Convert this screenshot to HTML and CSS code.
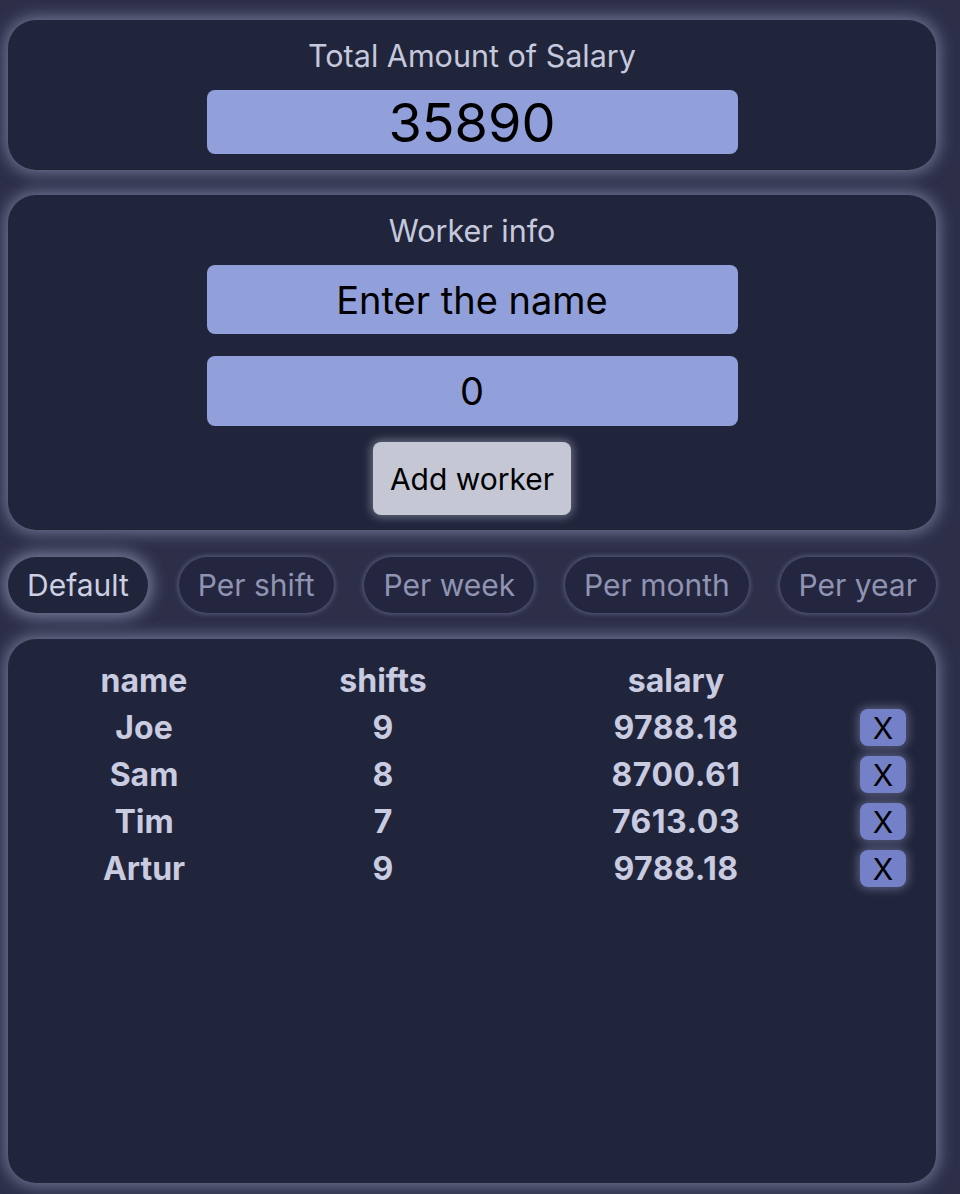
FILE: index.html
```html
<!DOCTYPE html>
<html lang="en">
<head>
<meta charset="utf-8">
<title>Salary</title>
<link rel="stylesheet" href="styles.css">
</head>
<body>
<div class="app">
  <section class="card total">
    <div class="title">Total Amount of Salary</div>
    <div class="field field-total">35890</div>
  </section>

  <section class="card worker">
    <div class="title">Worker info</div>
    <div class="field field-input">Enter the name</div>
    <div class="field field-input second">0</div>
    <button class="add-btn">Add worker</button>
  </section>

  <nav class="filters">
    <button class="pill active">Default</button>
    <button class="pill">Per shift</button>
    <button class="pill">Per week</button>
    <button class="pill">Per month</button>
    <button class="pill">Per year</button>
  </nav>

  <section class="card list">
    <div class="grid">
      <div class="cell">name</div>
      <div class="cell">shifts</div>
      <div class="cell">salary</div>
      <div class="cell"></div>

      <div class="cell">Joe</div>
      <div class="cell">9</div>
      <div class="cell num">9788.18</div>
      <div class="cell"><button class="del">X</button></div>

      <div class="cell">Sam</div>
      <div class="cell">8</div>
      <div class="cell num">8700.61</div>
      <div class="cell"><button class="del">X</button></div>

      <div class="cell">Tim</div>
      <div class="cell">7</div>
      <div class="cell num">7613.03</div>
      <div class="cell"><button class="del">X</button></div>

      <div class="cell">Artur</div>
      <div class="cell">9</div>
      <div class="cell num">9788.18</div>
      <div class="cell"><button class="del">X</button></div>
    </div>
  </section>
</div>
</body>
</html>
```

FILE: styles.css
```css
* { box-sizing: border-box; }

html, body {
  margin: 0;
  padding: 0;
  background: #2d2f49;
  height: 100%;
}

body {
  font-family: Inter, "Noto Sans", sans-serif;
  color: #c6c9dd;
  overflow: hidden;
}

.app {
  width: 928px;
  margin-left: 8px;
  padding-top: 20px;
  display: flex;
  flex-direction: column;
}

.card {
  background: #21253b;
  border-radius: 28px;
  box-shadow: 0 0 16px 3px rgba(170, 174, 208, 0.55);
  display: flex;
  flex-direction: column;
  align-items: center;
}

.title {
  font-size: 30.5px;
  line-height: 36px;
  color: #c6c9dd;
}

.field {
  width: 531px;
  background: #919fda;
  border-radius: 8px;
  color: #000;
  display: flex;
  align-items: center;
  justify-content: center;
}

.total {
  height: 150px;
  padding-top: 18px;
}

.field-total {
  margin-top: 16px;
  height: 64px;
  font-size: 54px;
}

.worker {
  margin-top: 25px;
  height: 335px;
  padding-top: 18px;
}

.field-input {
  margin-top: 16px;
  height: 69px;
  font-size: 38px;
}

.field-input.second {
  margin-top: 22px;
  height: 70px;
}

.add-btn {
  margin-top: 16px;
  width: 198px;
  height: 73px;
  border: none;
  border-radius: 8px;
  background: #c5c7d5;
  color: #000;
  font-family: inherit;
  font-size: 30px;
  box-shadow: 0 0 10px 2px rgba(200, 203, 225, 0.45);
}

.filters {
  margin-top: 27px;
  display: flex;
  justify-content: space-between;
}

.pill {
  height: 56px;
  padding: 0 19px;
  border: none;
  border-radius: 28px;
  background: #23263e;
  color: #9094b2;
  font-family: inherit;
  font-size: 30px;
  box-shadow: 0 0 5px 1px rgba(150, 154, 190, 0.45);
}

.pill.active {
  background: #21253b;
  color: #cdd0e2;
  box-shadow: 0 0 16px 4px rgba(175, 178, 212, 0.6);
}

.list {
  margin-top: 26px;
  height: 544px;
  padding: 18px 20px 0;
  align-items: stretch;
}

.grid {
  display: grid;
  grid-template-columns: 232px 246px 340px 74px;
  grid-auto-rows: 47px;
}

.cell {
  display: flex;
  align-items: center;
  justify-content: center;
  font-size: 32px;
  font-weight: 700;
  color: #c9cbe0;
}

.cell.num {
  letter-spacing: 0.5px;
}

.del {
  width: 46px;
  height: 37px;
  border: none;
  border-radius: 8px;
  background: #7480c7;
  color: #000;
  font-family: inherit;
  font-size: 30px;
  font-weight: 400;
  padding: 0;
  box-shadow: 0 0 10px 2px rgba(160, 166, 210, 0.45);
}
```
